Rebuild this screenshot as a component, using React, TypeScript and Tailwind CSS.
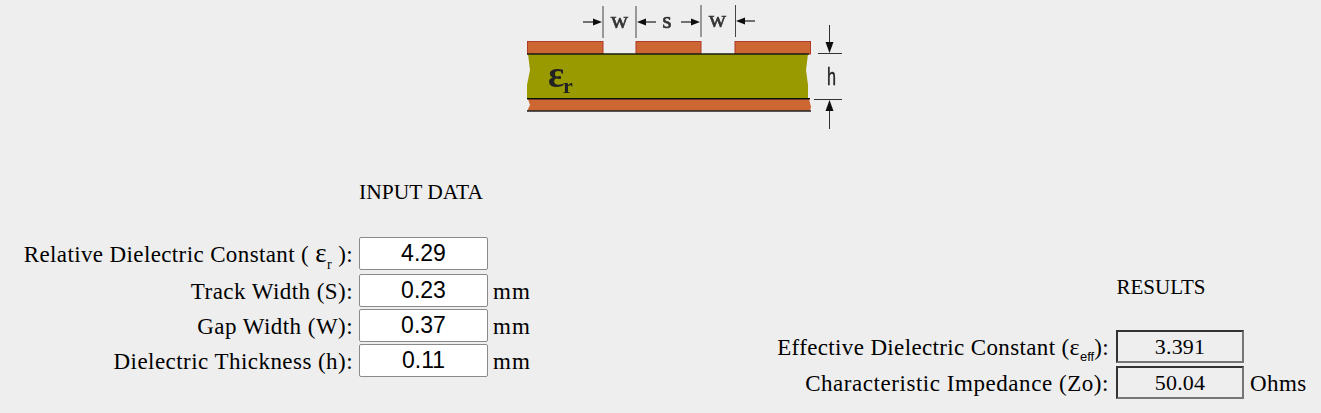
const serif = "font-['Liberation_Serif','Times_New_Roman',serif]";
const label = "text-[23px] tracking-[0.45px] leading-[31px] pt-[2px] text-black";

function Diagram() {
  const arrow = (x: number, y: number, dir: number) => (
    <g>
      <line x1={x - dir * 19} y1={y} x2={x - dir * 6} y2={y} stroke="#222" strokeWidth="1.2" />
      <polygon points={`${x},${y} ${x - dir * 9},${y - 3.5} ${x - dir * 9},${y + 3.5}`} fill="#111" />
    </g>
  );
  const sf = "'Liberation Serif', serif";
  return (
    <svg viewBox="510 0 350 140" className="block w-[350px] h-[140px] ml-[510px]">
      <defs>
        <filter id="soft" x="-5%" y="-5%" width="110%" height="110%">
          <feGaussianBlur stdDeviation="0.45" />
        </filter>
      </defs>
      <g filter="url(#soft)">
        <rect x="527.5" y="41.5" width="75.5" height="12.5" fill="#cc6633" stroke="#b03a2a" strokeWidth="1" />
        <rect x="636" y="41.5" width="65" height="12.5" fill="#cc6633" stroke="#b03a2a" strokeWidth="1" />
        <rect x="735" y="41.5" width="75.5" height="12.5" fill="#cc6633" stroke="#b03a2a" strokeWidth="1" />
        <polygon points="528,54 808,54 806,70 808,85 808,98.5 527,98.5 527,85 530,70" fill="#999900" />
        <polygon points="528,99 809,99 811,107 810,111 527,111 530,105" fill="#cc6633" />
        <line x1="527" y1="54" x2="809" y2="54" stroke="#1c1c10" strokeWidth="1.4" />
        <line x1="527" y1="98.7" x2="810" y2="98.7" stroke="#111" strokeWidth="1.6" />
        <line x1="527" y1="111" x2="811" y2="111" stroke="#222" strokeWidth="1.4" />
        <line x1="603" y1="6" x2="603" y2="38" stroke="#444" strokeWidth="1" />
        <line x1="636" y1="6" x2="636" y2="38" stroke="#444" strokeWidth="1" />
        <line x1="701" y1="5" x2="701" y2="37" stroke="#444" strokeWidth="1" />
        <line x1="735.5" y1="5" x2="735.5" y2="37" stroke="#444" strokeWidth="1" />
        {arrow(602, 22, 1)}
        {arrow(637, 22, -1)}
        {arrow(700, 22, 1)}
        {arrow(736, 21, -1)}
        <text x="619.5" y="28" textAnchor="middle" fontFamily={sf} fontSize="24" stroke="#333" strokeWidth="0.6" fill="#333">w</text>
        <text x="667" y="28" textAnchor="middle" fontFamily={sf} fontSize="24" stroke="#333" strokeWidth="0.6" fill="#333">s</text>
        <text x="717.5" y="27" textAnchor="middle" fontFamily={sf} fontSize="24" stroke="#333" strokeWidth="0.6" fill="#333">w</text>
        <text x="827" y="85" fontFamily="'Liberation Sans', sans-serif" fontSize="23" textLength="9" lengthAdjust="spacingAndGlyphs" stroke="#222" strokeWidth="0.4" fill="#222">h</text>
        <text x="548" y="87" fontFamily={sf} fontWeight="700" fontSize="38" fill="#222">ε</text>
        <text x="563" y="93" fontFamily={sf} fontWeight="700" fontSize="22" fill="#222">r</text>
        <line x1="818" y1="53.5" x2="842" y2="53.5" stroke="#333" strokeWidth="1" />
        <line x1="814" y1="99.5" x2="842" y2="99.5" stroke="#333" strokeWidth="1" />
        <line x1="829.5" y1="25" x2="829.5" y2="45" stroke="#333" strokeWidth="1" />
        <polygon points="829.5,53 825.5,42 833.5,42" fill="#111" />
        <line x1="829.5" y1="110" x2="829.5" y2="129" stroke="#333" strokeWidth="1" />
        <polygon points="829.5,100 825.5,111 833.5,111" fill="#111" />
      </g>
    </svg>
  );
}

function InputRow({ text, value, unit, className }: { text: React.ReactNode; value: string; unit?: string; className: string }) {
  return (
    <div className={`flex items-center ${className}`}>
      <div className={`w-[353px] text-right whitespace-nowrap ${serif} ${label}`}>{text}</div>
      <input
        readOnly
        value={value}
        className="ml-[6px] w-[129px] h-[33px] bg-white border border-[#8a8a8a] rounded-[2px] text-center font-['Liberation_Sans',Arial,sans-serif] text-[23px] text-black outline-none"
      />
      {unit && <span className={`ml-[5px] ${serif} ${label} !tracking-[1px]`}>{unit}</span>}
    </div>
  );
}

function ResultRow({ text, value, unit, className }: { text: React.ReactNode; value: string; unit?: string; className: string }) {
  return (
    <div className={`flex items-center ${className}`}>
      <div className={`w-[341px] text-right whitespace-nowrap ${serif} ${label}`}>{text}</div>
      <div className={`ml-[7px] w-[128px] h-[33px] border-2 border-t-[#333333] border-l-[#333333] border-b-[#767676] border-r-[#767676] flex items-center justify-center ${serif} text-[22px] tracking-[0.2px] text-black`}>
        {value}
      </div>
      {unit && <span className={`ml-[6px] ${serif} ${label}`}>{unit}</span>}
    </div>
  );
}

export default function App() {
  return (
    <div className="w-[1321px] h-[413px] bg-[#eeeeee] overflow-hidden">
      <Diagram />
      <div className="flex mt-[37px]">
        <div className="w-[768px] shrink-0">
          <div className={`ml-[359px] w-[124px] text-center whitespace-nowrap ${serif} text-[21.5px] leading-[30px] text-black`}>INPUT DATA</div>
          <div className="mt-[30px]">
            <InputRow text={<span className="tracking-[0.38px]">Relative Dielectric Constant ( <span className="text-[27px] leading-none">ε</span><sub className="text-[14px] align-[-3px] leading-none">r</sub> ):</span>} value="4.29" className="mb-[4px]" />
            <InputRow text="Track Width (S):" value="0.23" unit="mm" className="mb-[2px]" />
            <InputRow text="Gap Width (W):" value="0.37" unit="mm" className="mb-[2px]" />
            <InputRow text="Dielectric Thickness (h):" value="0.11" unit="mm" className="" />
          </div>
        </div>
        <div className="pt-[95px]">
          <div className={`ml-[348px] w-[90px] text-center whitespace-nowrap ${serif} text-[21px] leading-[30px] text-black`}>RESULTS</div>
          <div className="mt-[28px]">
            <ResultRow text={<span className="tracking-[0.36px]">Effective Dielectric Constant (<span className="text-[24px] leading-none">ε</span><sub className="font-['Liberation_Sans',Arial,sans-serif] tracking-normal text-[13px] align-[-3px] leading-none">eff</sub>):</span>} value="3.391" className="mb-[3px]" />
            <ResultRow text={<span className="tracking-[0.55px]">Characteristic Impedance (Zo):</span>} value="50.04" unit="Ohms" className="" />
          </div>
        </div>
      </div>
    </div>
  );
}
